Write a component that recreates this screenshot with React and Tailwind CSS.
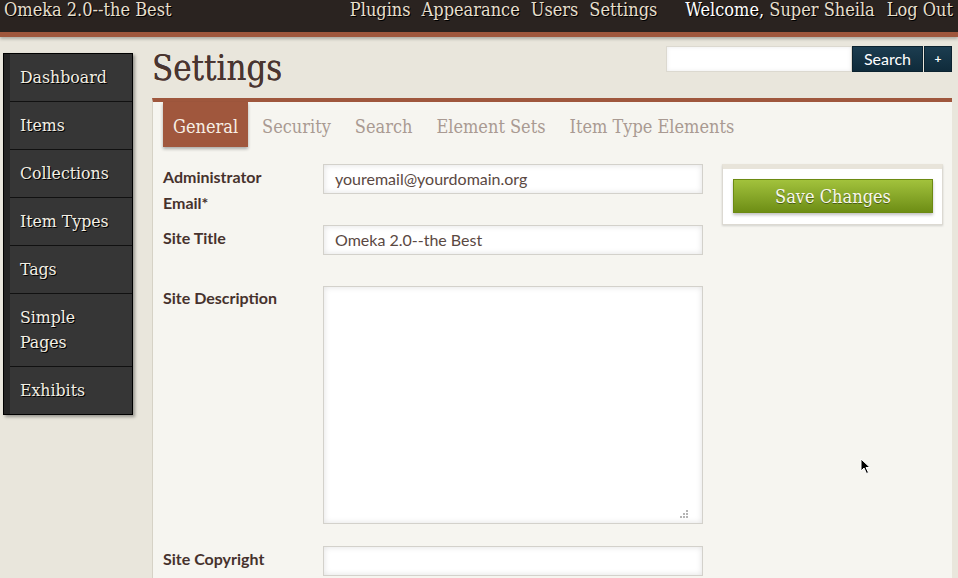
import React from 'react';

const serif = "font-['DejaVu_Serif_Condensed','DejaVu_Serif',serif]";
const sans = "font-['Lato','Noto_Sans',sans-serif]";

const navItems = ['Dashboard', 'Items', 'Collections', 'Item Types', 'Tags', 'Simple Pages', 'Exhibits'];
const tabs = ['General', 'Security', 'Search', 'Element Sets', 'Item Type Elements'];

function Header() {
    return (
        <header className="border-b-[5px] border-[#9f573d] bg-[#2a2320] shadow-[0_2px_3px_rgba(0,0,0,0.25)]">
            <div className={`flex h-[32px] items-start justify-between pl-[4px] pr-[5px] text-[18px] leading-[19px] text-[#e6dfcc] ${serif}`}>
                <span className="[text-shadow:1px_1px_0_#000]">Omeka 2.0--the Best</span>
                <div className="flex items-start">
                    <nav className="flex gap-[11px] [text-shadow:1px_1px_0_#000]">
                        <a>Plugins</a>
                        <a>Appearance</a>
                        <a>Users</a>
                        <a>Settings</a>
                    </nav>
                    <div className="ml-[28px] flex gap-[12px] [text-shadow:1px_1px_0_#000]">
                        <span>
                            <span className="text-white">Welcome,</span> Super Sheila
                        </span>
                        <a>Log Out</a>
                    </div>
                </div>
            </div>
        </header>
    );
}

function Sidebar() {
    return (
        <aside className="ml-[3px] mt-[16px] w-[130px] self-start border border-black bg-[#242424] shadow-[2px_2px_3px_rgba(0,0,0,0.35)]">
            <ul className={`ml-[6px] ${serif}`}>
                {navItems.map((item, i) => (
                    <li
                        key={item}
                        className={`bg-[#363636] pl-[10px] py-[11px] text-[17.5px] leading-[25px] text-[#f3efe4] [text-shadow:1px_1px_0_#000] ${i < navItems.length - 1 ? 'border-b border-[#111]' : ''}`}
                    >
                        <span className="block max-w-[102px]">{item}</span>
                    </li>
                ))}
            </ul>
        </aside>
    );
}

function Field({ label, children, className = '' }) {
    return (
        <div className={`flex ${className}`}>
            <label className={`w-[160px] shrink-0 text-[16px] font-bold leading-[26px] text-[#46322d] ${sans}`}>{label}</label>
            {children}
        </div>
    );
}

function TextInput({ value }) {
    return (
        <div className={`flex h-[30px] w-[380px] items-center border border-[#d3d1cb] bg-white pl-[11px] text-[16px] text-[#5a4842] shadow-[inset_0_0_6px_rgba(0,0,0,0.12)] ${sans}`}>
            {value}
        </div>
    );
}

export default function App() {
    return (
        <div className="relative min-h-screen overflow-hidden bg-[#e9e6dc]">
            <Header />
            <div className="flex">
                <Sidebar />

                <main className="ml-[19px] mr-[6px] flex-1">
                    {/* Title + search */}
                    <div className="flex h-[61px] justify-between">
                        <h1 className={`mt-[11px] text-[34.5px] leading-[40px] text-[#4a3530] [text-shadow:0_0_0.6px_#4a3530] ${serif}`}>Settings</h1>
                        <form className="mt-[9px] flex h-[26px] self-start">
                            <div className="w-[186px] border border-[#dcd9d0] bg-white shadow-[inset_0_0_4px_rgba(0,0,0,0.08)]" />
                            <button type="button" className={`w-[71px] border border-[#0c2330] bg-gradient-to-b from-[#1c3d50] to-[#0f2b3b] text-[16px] text-white ${sans}`}>
                                Search
                            </button>
                            <button type="button" className={`ml-px w-[28px] border border-[#0c2330] bg-gradient-to-b from-[#1c3d50] to-[#0f2b3b] text-[12px] font-bold text-white ${sans}`}>
                                +
                            </button>
                        </form>
                    </div>

                    {/* Panel */}
                    <section className="border-l border-t-4 border-l-[#d6d2c6] border-t-[#9f573d] bg-[#f6f5f0] pb-10">
                        <div className={`flex gap-[4px] pl-[10px] text-[18px] text-[#a99a92] ${serif}`}>
                            {tabs.map((t, i) => (
                                <div
                                    key={t}
                                    className={`flex h-[45px] items-center px-[10px] pt-[3px] ${i === 0 ? 'bg-[#a0573d] text-[#f7efe6] shadow-[0_2px_3px_rgba(0,0,0,0.3)]' : ''}`}
                                >
                                    {t}
                                </div>
                            ))}
                        </div>

                        <div className="flex pl-[10px] pt-[17px]">
                            <div className="w-[540px] shrink-0">
                                <Field label={<>Administrator<br />Email*</>} className="mb-[9px]">
                                    <TextInput value="youremail@yourdomain.org" />
                                </Field>
                                <Field label="Site Title" className="mb-[30px]">
                                    <TextInput value="Omeka 2.0--the Best" />
                                </Field>
                                <Field label="Site Description" className="mb-[22px]">
                                    <div className="relative mt-[1px] h-[238px] w-[380px] border border-[#d3d1cb] bg-white shadow-[inset_0_0_6px_rgba(0,0,0,0.12)]">
                                        <svg className="absolute bottom-[3px] right-[12px]" width="10" height="10" viewBox="0 0 10 10" fill="#b5b5b5">
                                            <rect x="6" y="0" width="2" height="2" />
                                            <rect x="3" y="3" width="2" height="2" />
                                            <rect x="6" y="3" width="2" height="2" />
                                            <rect x="0" y="6" width="2" height="2" />
                                            <rect x="3" y="6" width="2" height="2" />
                                            <rect x="6" y="6" width="2" height="2" />
                                        </svg>
                                    </div>
                                </Field>
                                <Field label={<>Site Copyright<br />Information</>}>
                                    <TextInput value="" />
                                </Field>
                            </div>

                            {/* Save panel */}
                            <div className="ml-[19px] w-[221px] self-start border border-[#dcd9d2] border-t-[5px] border-t-[#e8e4da] bg-white px-[10px] pb-[11px] pt-[10px] shadow-[0_1px_2px_rgba(0,0,0,0.15)]">
                                <button
                                    type="button"
                                    className={`h-[34px] w-[200px] border border-[#6c8a12] bg-gradient-to-b from-[#a2c23c] to-[#6e8e14] text-[18px] text-[#f8f8ec] shadow-[0_2px_3px_rgba(0,0,0,0.25)] [text-shadow:0_1px_0_rgba(0,0,0,0.4)] ${serif}`}
                                >
                                    Save Changes
                                </button>
                            </div>
                        </div>
                    </section>
                </main>
            </div>

            {/* mouse pointer */}
            <svg className="absolute left-[860px] top-[458px]" width="12" height="18" viewBox="0 0 12 18">
                <path d="M1 1 L1 13 L4 10 L6.5 15.5 L8.5 14.5 L6 9.5 L10 9.5 Z" fill="#000" stroke="#fff" strokeWidth="1" />
            </svg>
        </div>
    );
}
